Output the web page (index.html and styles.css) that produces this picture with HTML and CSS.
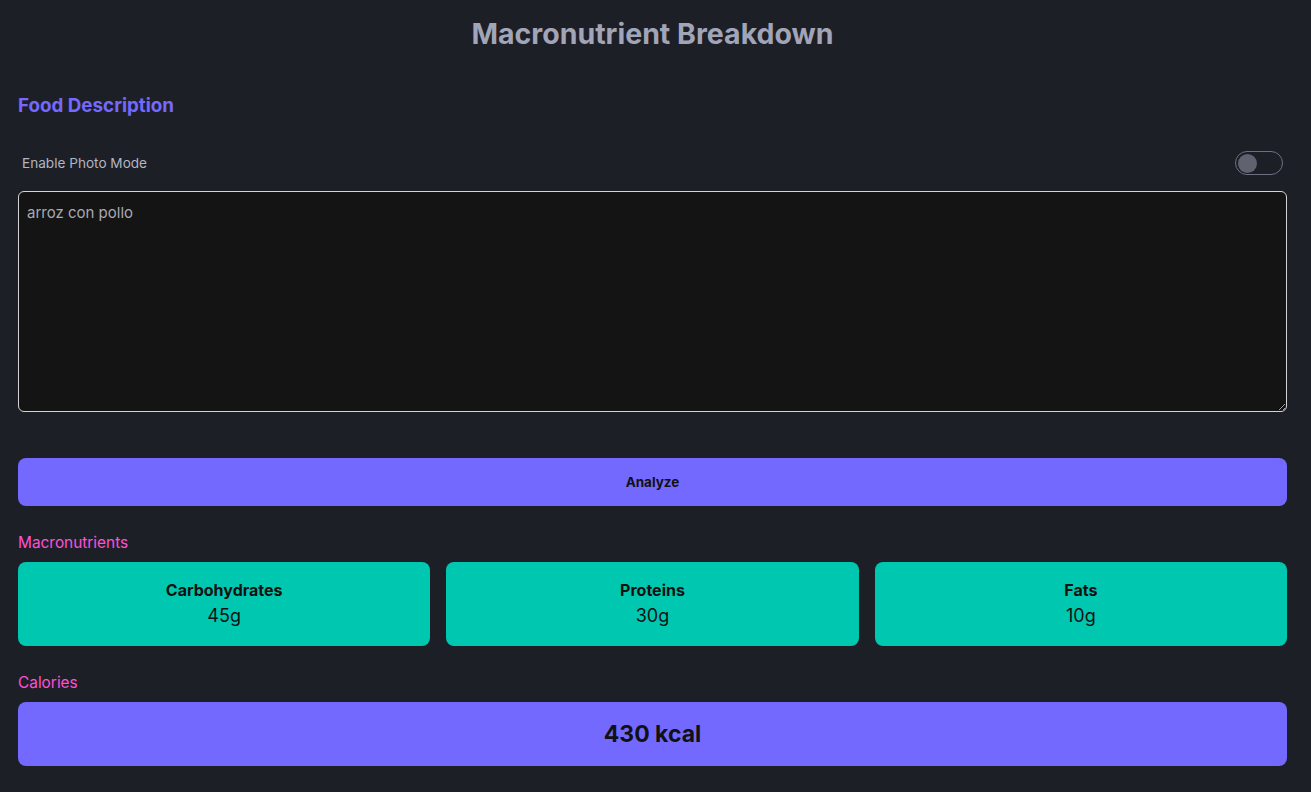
FILE: index.html
```html
<!DOCTYPE html>
<html lang="en">
<head>
<meta charset="utf-8">
<title>Macronutrient Breakdown</title>
<link rel="stylesheet" href="styles.css">
</head>
<body>
<main class="page">
  <h1 class="title">Macronutrient Breakdown</h1>
  <h2 class="section-title">Food Description</h2>
  <div class="toggle-row">
    <span class="toggle-label">Enable Photo Mode</span>
    <span class="toggle"><span class="knob"></span></span>
  </div>
  <textarea class="food-input">arroz con pollo</textarea>
  <button class="analyze">Analyze</button>
  <div class="label">Macronutrients</div>
  <div class="cards">
    <div class="card"><div class="card-title">Carbohydrates</div><div class="card-value">45g</div></div>
    <div class="card"><div class="card-title">Proteins</div><div class="card-value">30g</div></div>
    <div class="card"><div class="card-title">Fats</div><div class="card-value">10g</div></div>
  </div>
  <div class="label cal-label">Calories</div>
  <div class="calories">430 kcal</div>
</main>
</body>
</html>
```
FILE: styles.css
```css
* { box-sizing: border-box; }
html, body { margin: 0; padding: 0; }
body {
  background: #1d1f27;
  font-family: Inter, "Noto Sans", sans-serif;
  color: #e0e0e0;
}
.page {
  padding: 0 24px 0 18px;
  display: flex;
  flex-direction: column;
}
.title {
  margin: 17px 0 0;
  text-align: center;
  font-size: 28.5px;
  line-height: 34px;
  font-weight: 700;
  color: #a1a5b7;
}
.section-title {
  margin: 43px 0 0;
  font-size: 18.8px;
  line-height: 24px;
  font-weight: 700;
  color: #7469ff;
}
.toggle-row {
  margin-top: 33px;
  display: flex;
  align-items: center;
  justify-content: space-between;
  padding: 0 4px 0 4px;
  height: 24px;
}
.toggle-label {
  font-size: 13.6px;
  color: #b2b5c2;
}
.toggle {
  width: 48px;
  height: 24px;
  border: 1px solid #6d7080;
  border-radius: 12px;
  display: flex;
  align-items: center;
  padding: 0 2px;
}
.knob {
  width: 19px;
  height: 19px;
  border-radius: 50%;
  background: #60626f;
}
.food-input {
  margin-top: 16px;
  width: 100%;
  height: 221px;
  background: #141414;
  border: 1px solid #d4d4d8;
  border-radius: 6px;
  color: #a7a9b5;
  font-family: Inter, "Noto Sans", sans-serif;
  font-size: 15px;
  line-height: 20px;
  padding: 11px 8px;
  resize: vertical;
  display: block;
}
.analyze {
  margin-top: 46px;
  height: 48px;
  width: 100%;
  border: none;
  border-radius: 8px;
  background: #7469ff;
  color: #111;
  font-family: Inter, "Noto Sans", sans-serif;
  font-size: 13.5px;
  font-weight: 700;
}
.label {
  margin-top: 27px;
  font-size: 15.4px;
  line-height: 20px;
  color: #ff4fd8;
}
.cards {
  margin-top: 9px;
  display: grid;
  grid-template-columns: 1fr 1fr 1fr;
  gap: 16px;
}
.card {
  height: 84px;
  background: #00c7b0;
  border-radius: 8px;
  display: flex;
  flex-direction: column;
  align-items: center;
  justify-content: center;
  color: #111;
  gap: 5px;
  padding-bottom: 2px;
}
.card-title {
  font-size: 16px;
  font-weight: 700;
  line-height: 20px;
}
.card-value {
  font-size: 18px;
  line-height: 22px;
}
.cal-label { margin-top: 27px; }
.calories {
  margin-top: 9px;
  height: 64px;
  background: #7469ff;
  border-radius: 8px;
  display: flex;
  align-items: center;
  justify-content: center;
  color: #111;
  font-size: 23px;
  font-weight: 700;
}
```
